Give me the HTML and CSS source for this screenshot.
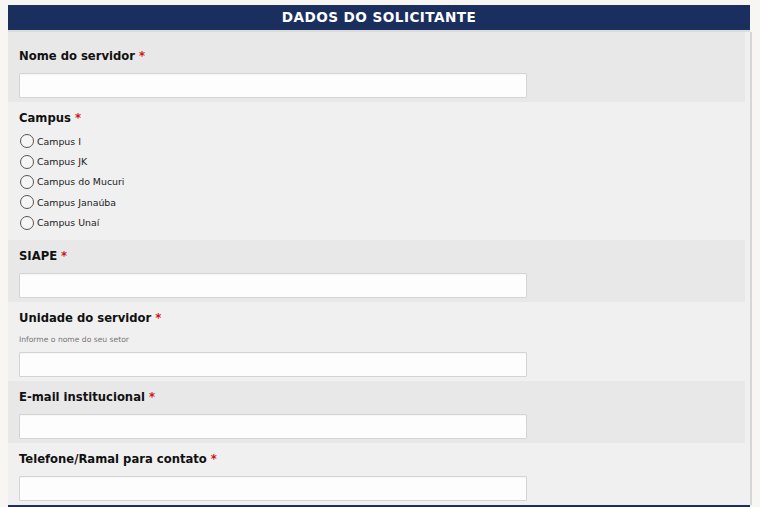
FILE: index.html
```html
<!DOCTYPE html>
<html lang="pt-BR">
<head>
<meta charset="utf-8">
<title>Dados do Solicitante</title>
<link rel="stylesheet" href="styles.css">
</head>
<body>
<div class="panel">
  <div class="panel-head">DADOS DO SOLICITANTE</div>
  <div class="panel-body">
    <div class="row dark first">
      <label class="lbl">Nome do servidor <span class="req">*</span></label>
      <input class="field" type="text">
    </div>
    <div class="row light campus">
      <label class="lbl">Campus <span class="req">*</span></label>
      <div class="opts">
        <label class="opt"><input type="radio" name="campus"><span>Campus I</span></label>
        <label class="opt"><input type="radio" name="campus"><span>Campus JK</span></label>
        <label class="opt"><input type="radio" name="campus"><span>Campus do Mucuri</span></label>
        <label class="opt"><input type="radio" name="campus"><span>Campus Janaúba</span></label>
        <label class="opt"><input type="radio" name="campus"><span>Campus Unaí</span></label>
      </div>
    </div>
    <div class="row dark">
      <label class="lbl">SIAPE <span class="req">*</span></label>
      <input class="field" type="text">
    </div>
    <div class="row light">
      <label class="lbl with-hint">Unidade do servidor <span class="req">*</span></label>
      <div class="hint">Informe o nome do seu setor</div>
      <input class="field" type="text">
    </div>
    <div class="row dark">
      <label class="lbl">E-mail institucional <span class="req">*</span></label>
      <input class="field" type="text">
    </div>
    <div class="row light">
      <label class="lbl">Telefone/Ramal para contato <span class="req">*</span></label>
      <input class="field" type="text">
    </div>
  </div>
  <div class="panel-foot"></div>
</div>
</body>
</html>
```
FILE: styles.css
```css
html, body {
  margin: 0;
  padding: 0;
}
body {
  background: #f7f6f2;
  font-family: "DejaVu Sans", Verdana, sans-serif;
  color: #111;
  padding: 5px 0 0 8px;
  height: 502px;
  overflow: hidden;
}
.panel {
  width: 744px;
}
.panel-head {
  width: 742px;
  height: 25px;
  background: #1b2f5f;
  color: #fff;
  font-weight: bold;
  font-size: 13.6px;
  letter-spacing: 0.45px;
  line-height: 25px;
  text-align: center;
  border-bottom: 2px solid #dcdcdc;
}
.panel-body {
  width: 742px;
  background: #f0f0f0;
  border-right: 2px solid #d6d6d6;
}
.row {
  display: flex;
  flex-direction: column;
  align-items: flex-start;
  padding: 9px 0 4px 11px;
  margin-right: 5px;
}
.row.first {
  padding-top: 17px;
}
.dark {
  background: #e8e8e8;
}
.light {
  background: #f0f0f0;
}
.lbl {
  font-weight: bold;
  font-size: 11.6px;
  line-height: 15px;
  margin-bottom: 9px;
}
.req {
  color: #d2151b;
}
.hint {
  font-size: 7.6px;
  line-height: 10px;
  color: #777;
  margin-bottom: 7px;
}
.field {
  box-sizing: border-box;
  width: 508px;
  height: 25px;
  margin: 0;
  border: 1px solid #d4d4d4;
  background: #fdfdfd;
  border-radius: 1px;
  box-shadow: inset 0 1px 1px rgba(0,0,0,0.03);
}
.campus {
  padding-bottom: 7px;
}
.campus .lbl {
  margin-bottom: 5px;
}
.opts {
  display: flex;
  flex-direction: column;
}
.opt {
  display: flex;
  align-items: center;
  height: 20.4px;
  font-size: 9.4px;
  color: #222;
}
.opt input {
  appearance: none;
  -webkit-appearance: none;
  box-sizing: border-box;
  width: 14px;
  height: 14px;
  margin: 0 3px 0 1px;
  border: 1.8px solid #555;
  border-radius: 50%;
  background: #f6f6f6;
}
.panel-foot {
  width: 742px;
  height: 4px;
  background: #1b2f5f;
}
```
